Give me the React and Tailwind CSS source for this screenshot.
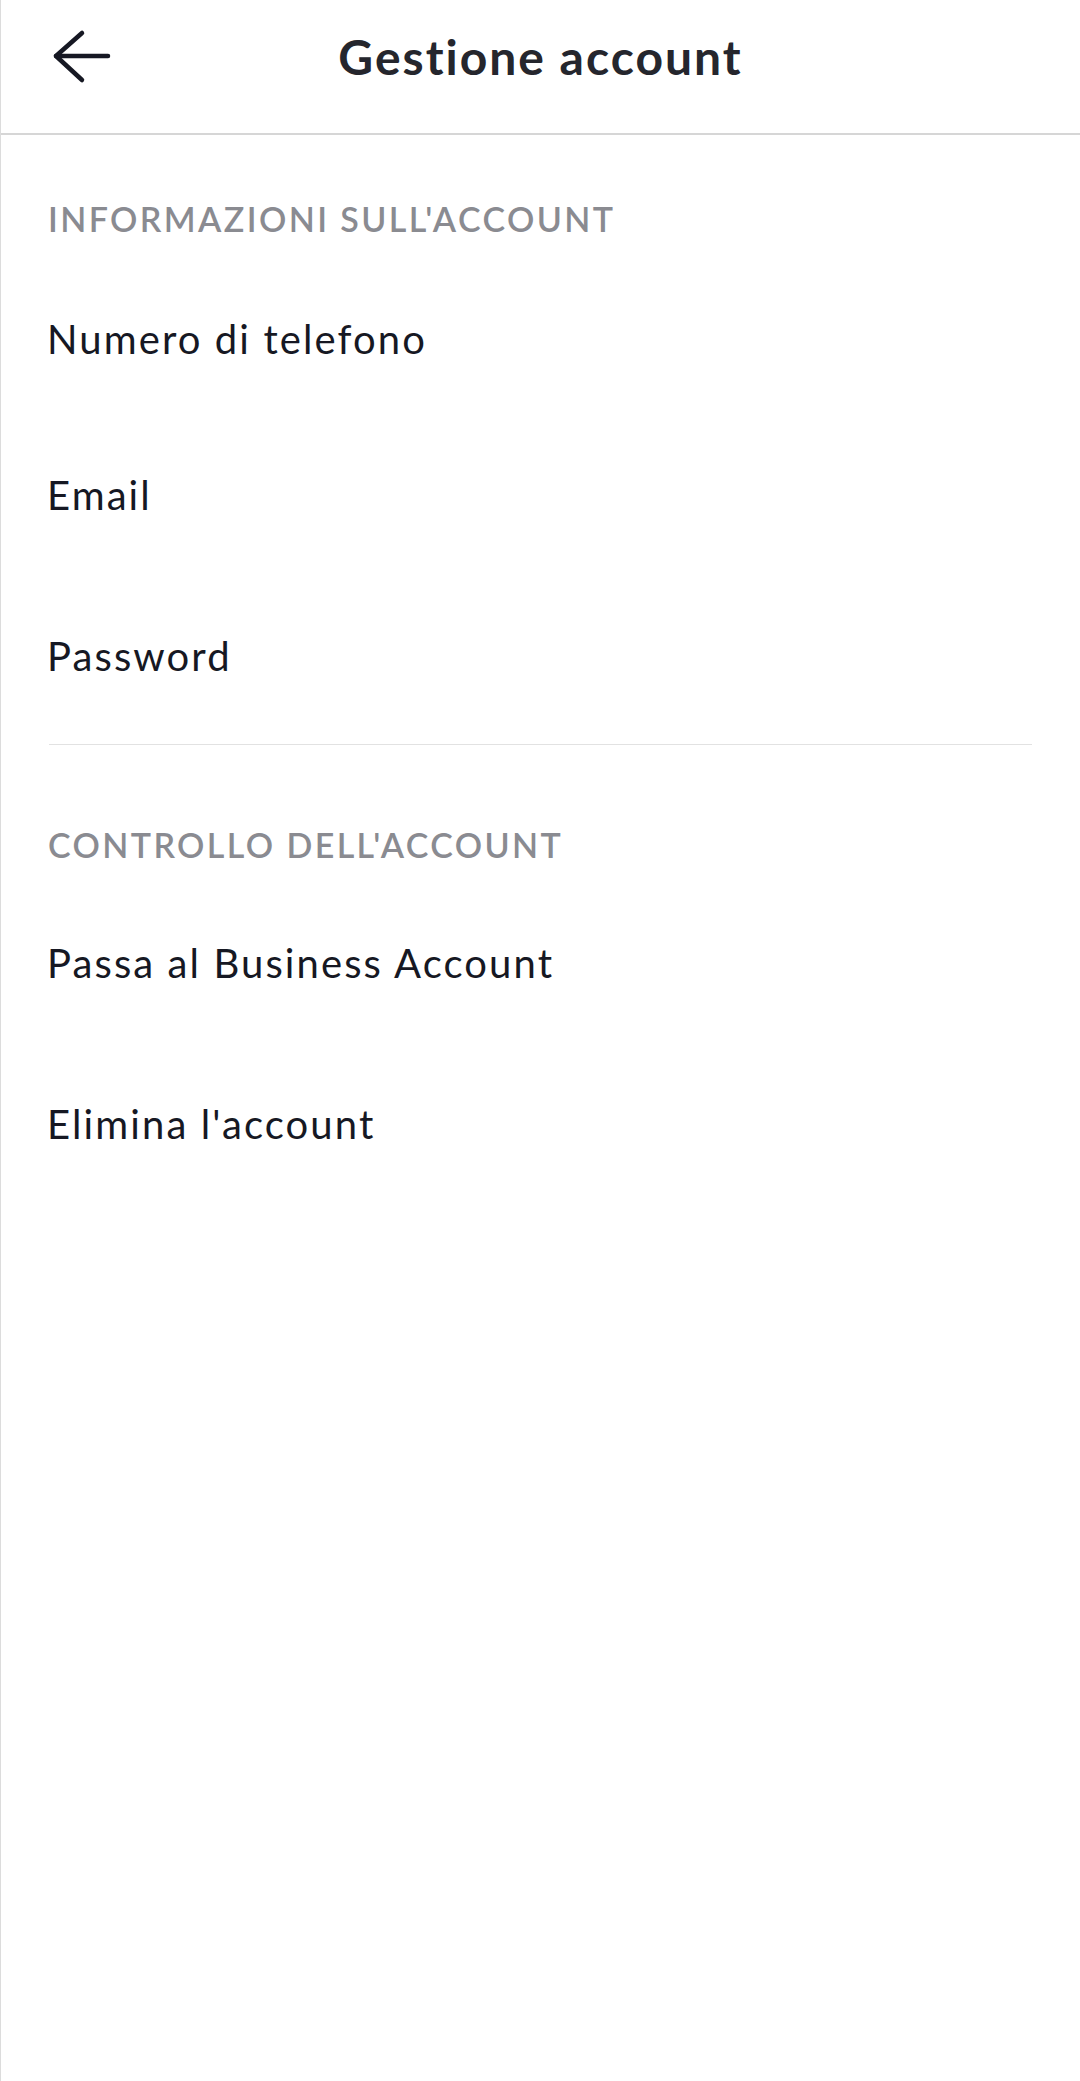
const font = { fontFamily: 'Lato, "Liberation Sans", sans-serif' };

function SectionLabel({ children }) {
  return (
    <div className="h-[64px] flex items-center pl-[47px] text-[34px] font-semibold tracking-[2.4px] text-[#8a8b91] leading-none">
      {children}
    </div>
  );
}

function Row({ label, h = 'h-[156px]' }) {
  return (
    <div className={`${h} flex items-center pl-[46px] text-[40px] tracking-[2.1px] text-[#161823] leading-none`}>
      {label}
    </div>
  );
}

export default function App() {
  return (
    <div
      className="w-[1080px] min-h-[2081px] bg-white border-l border-[#dcdcdc] [font-variant-ligatures:none]"
      style={font}
    >
      <header className="h-[135px] pb-[20px] border-b-2 border-[#d6d6d6] grid grid-cols-[1fr_auto_1fr] items-center">
        <button className="pl-[48px] flex items-center">
          <svg width="64" height="64" viewBox="0 0 64 64" fill="none" stroke="#161823" strokeWidth="4.5" strokeLinecap="round" strokeLinejoin="round">
            <path d="M33 8 L7 31 L33 55" />
            <path d="M7 31 H59" />
          </svg>
        </button>
        <h1 className="text-[48px] font-bold tracking-[2px] text-[#25262d] leading-none">Gestione account</h1>
        <div />
      </header>

      <section className="pt-[52px]">
        <SectionLabel>INFORMAZIONI SULL'ACCOUNT</SectionLabel>
        <div className="pt-[10px]">
          <Row label="Numero di telefono" />
          <Row label="Email" />
          <Row label="Password" h="h-[166px]" />
        </div>
        <div className="mx-[48px] mt-[5px] border-t border-[#e2e2e2]" />
      </section>

      <section className="pt-[68px]">
        <SectionLabel>CONTROLLO DELL'ACCOUNT</SectionLabel>
        <div className="pt-[6px]">
          <Row label="Passa al Business Account" h="h-[160px]" />
          <Row label="Elimina l'account" h="h-[161px]" />
        </div>
      </section>
    </div>
  );
}
